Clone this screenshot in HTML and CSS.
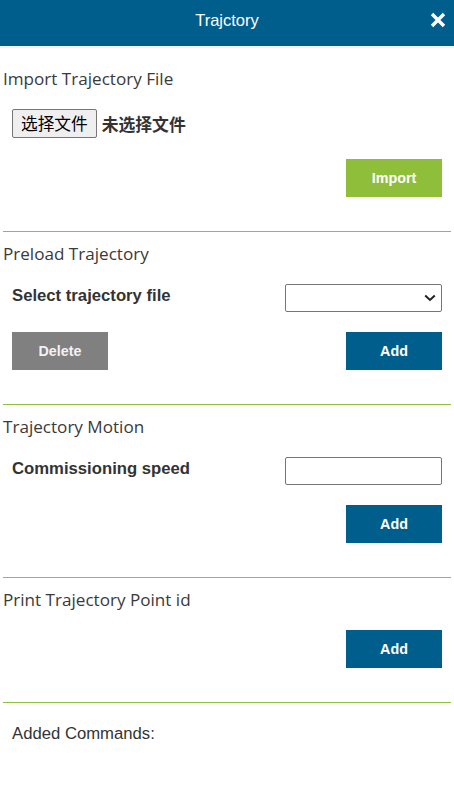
FILE: index.html
```html
<!DOCTYPE html>
<html lang="zh-CN">
<head>
<meta charset="utf-8">
<title>Trajctory</title>
<link rel="stylesheet" href="styles.css">
</head>
<body>
<header class="topbar">
  <span class="topbar-title">Trajctory</span>
  <button class="close" aria-label="Close">
    <svg width="16" height="16" viewBox="0 0 16 16"><path d="M2 2 L14 14 M14 2 L2 14" stroke="#fff" stroke-width="3.4" stroke-linecap="butt" fill="none"/></svg>
  </button>
</header>
<main class="panel">
  <section class="sec sec-first">
    <h2 class="sec-title">Import Trajectory File</h2>
    <div class="file-row">
      <button class="file-btn">选择文件</button>
      <span class="file-name">未选择文件</span>
    </div>
    <div class="actions actions-end actions-file">
      <button class="btn btn-green">Import</button>
    </div>
  </section>
  <section class="sec">
    <h2 class="sec-title">Preload Trajectory</h2>
    <div class="field-row">
      <label class="field-label">Select trajectory file</label>
      <div class="select-wrap">
        <select class="control"></select>
        <svg class="chev" width="12" height="8" viewBox="0 0 12 8"><path d="M1.2 1.5 L6 6 L10.8 1.5" stroke="#222" stroke-width="2" fill="none"/></svg>
      </div>
    </div>
    <div class="actions actions-between">
      <button class="btn btn-gray">Delete</button>
      <button class="btn btn-blue">Add</button>
    </div>
  </section>
  <section class="sec">
    <h2 class="sec-title">Trajectory Motion</h2>
    <div class="field-row">
      <label class="field-label">Commissioning speed</label>
      <input class="control" type="text">
    </div>
    <div class="actions actions-end">
      <button class="btn btn-blue">Add</button>
    </div>
  </section>
  <section class="sec">
    <h2 class="sec-title">Print Trajectory Point id</h2>
    <div class="actions actions-end actions-direct">
      <button class="btn btn-blue">Add</button>
    </div>
  </section>
  <section class="sec sec-last">
    <p class="added">Added Commands:</p>
  </section>
</main>
</body>
</html>
```
FILE: styles.css
```css
* { box-sizing: border-box; }
html, body { margin: 0; padding: 0; background: #fff; }
body { width: 454px; font-family: "Liberation Sans", Arial, sans-serif; color: #333; }

.topbar {
  position: relative;
  height: 48px;
  background: #005e8c;
  border-bottom: 2px solid #f1f1f1;
  text-align: center;
}
.topbar-title {
  display: block;
  line-height: 40px;
  font-size: 16.5px;
  color: #fff;
}
.close {
  position: absolute;
  top: 12px;
  left: 430px;
  width: 16px;
  height: 16px;
  padding: 0;
  border: 0;
  background: none;
  display: block;
}
.close svg { display: block; }

.panel { margin: 0 3px; }

.sec {
  border-bottom: 1px solid #8dc03f;
  padding-bottom: 34px;
}
.sec-last { border-bottom: 0; padding-bottom: 40px; }

.sec-title {
  margin: 10px 0 0;
  font-family: "Open Sans", "Noto Sans", sans-serif;
  font-weight: 400;
  font-size: 17.1px;
  line-height: 24px;
  color: #3a3a3a;
}
.sec-first .sec-title { margin-top: 19px; }

.file-row {
  margin: 18px 9px 0;
  display: flex;
  align-items: center;
  gap: 5px;
}
.file-btn {
  height: 29px;
  padding: 0 8px;
  margin: 0;
  background: #efefef;
  border: 1px solid #767676;
  border-radius: 2px;
  font-family: "Noto Sans CJK SC", sans-serif;
  font-size: 16.7px;
  line-height: 27px;
  color: #000;
}
.file-name {
  font-family: "Noto Sans CJK SC", sans-serif;
  font-weight: 700;
  font-size: 16.8px;
  color: #333;
}

.field-row {
  margin: 18px 9px 0;
  display: flex;
  justify-content: space-between;
  align-items: flex-start;
}
.field-label {
  font-weight: 700;
  font-size: 16.7px;
  line-height: 23px;
  color: #333;
}
.select-wrap { position: relative; width: 157px; height: 28px; }
.control {
  display: block;
  width: 157px;
  height: 28px;
  margin: 0;
  padding: 0 6px;
  border: 1px solid #767676;
  border-radius: 2px;
  background: #fff;
  font-family: "Liberation Sans", Arial, sans-serif;
  font-size: 14px;
  appearance: none;
  -webkit-appearance: none;
  outline: none;
}
.chev {
  position: absolute;
  right: 6px;
  top: 10px;
  pointer-events: none;
}

.actions {
  margin: 20px 9px 0;
  display: flex;
}
.actions-file { margin-top: 21px; }
.actions-direct { margin-top: 18px; }
.actions-end { justify-content: flex-end; }
.actions-between { justify-content: space-between; }

.btn {
  width: 96px;
  height: 38px;
  margin: 0;
  padding: 0;
  border: 0;
  border-radius: 0;
  font-family: "Liberation Sans", Arial, sans-serif;
  font-weight: 700;
  font-size: 14.3px;
  color: #fff;
}
.btn-green { background: #8fbe3b; }
.btn-blue { background: #005e8c; }
.btn-gray { background: #808080; color: #f2f2f2; }

.added {
  margin: 21px 9px 0;
  font-size: 16.7px;
  line-height: 19px;
  color: #333;
}
```
